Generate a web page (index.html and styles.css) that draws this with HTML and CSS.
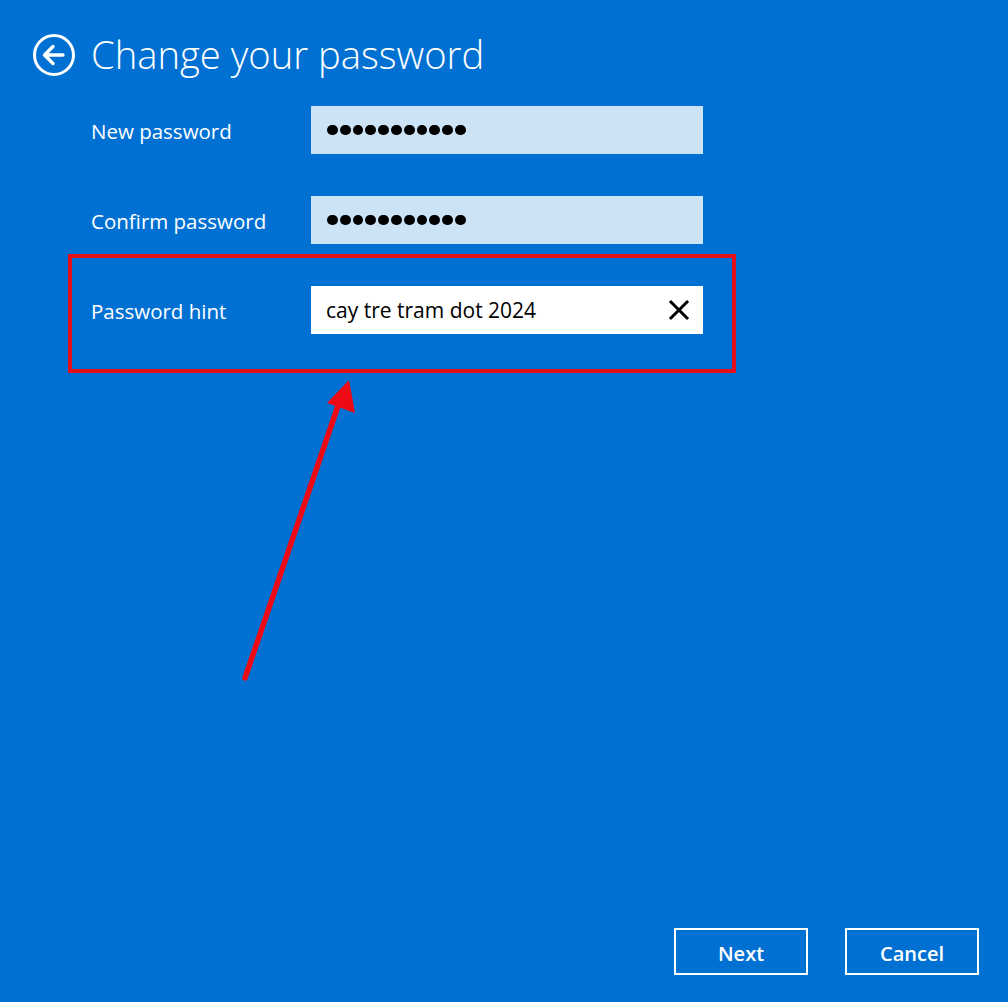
FILE: index.html
```html
<!DOCTYPE html>
<html>
<head>
<meta charset="utf-8">
<title>Change your password</title>
<link rel="stylesheet" href="styles.css">
</head>
<body>
<div class="page">
  <header class="header">
    <svg class="back" width="44" height="44" viewBox="0 0 44 44">
      <circle cx="22" cy="22" r="19.5" fill="none" stroke="#fff" stroke-width="3"/>
      <path d="M31 22 H13 M21 13.5 L12.5 22 L21 30.5" fill="none" stroke="#fff" stroke-width="3.4" stroke-linecap="round" stroke-linejoin="round"/>
    </svg>
    <h1 class="title">Change your password</h1>
  </header>

  <main class="form">
    <div class="row">
      <label class="label">New password</label>
      <div class="field field-filled">
        <span class="dots"><i></i><i></i><i></i><i></i><i></i><i></i><i></i><i></i><i></i><i></i><i></i></span>
      </div>
    </div>
    <div class="row">
      <label class="label">Confirm password</label>
      <div class="field field-filled">
        <span class="dots"><i></i><i></i><i></i><i></i><i></i><i></i><i></i><i></i><i></i><i></i><i></i></span>
      </div>
    </div>
    <div class="row row-highlight">
      <label class="label">Password hint</label>
      <div class="field field-active">
        <span class="value">cay tre tram dot 2024</span>
        <svg class="clear" width="22" height="22" viewBox="0 0 22 22">
          <path d="M3 3 L19 19 M19 3 L3 19" stroke="#000" stroke-width="3" stroke-linecap="square"/>
        </svg>
      </div>
    </div>
  </main>

  <footer class="footer">
    <button class="btn">Next</button>
    <button class="btn">Cancel</button>
  </footer>

  <svg class="arrow" width="1008" height="1002" viewBox="0 0 1008 1002">
    <line x1="245" y1="678" x2="340" y2="400" stroke="#ee0a14" stroke-width="5.5" stroke-linecap="round"/>
    <polygon points="349,380 327,403 355,413" fill="#ee0a14"/>
  </svg>
</div>
</body>
</html>
```

FILE: styles.css
```css
html, body {
  margin: 0;
  padding: 0;
}
body {
  background: #0071d3;
  font-family: "Open Sans", "Noto Sans", sans-serif;
  color: #fff;
}
.page {
  position: relative;
  width: 1008px;
  height: 1002px;
  display: flex;
  flex-direction: column;
  overflow: hidden;
}
.header {
  display: flex;
  align-items: center;
  padding: 33px 0 0 32px;
  height: 44px;
}
.back {
  display: block;
  flex: none;
}
.title {
  margin: 0 0 0 15px;
  font-weight: 300;
  font-size: 38.2px;
  line-height: 44px;
  letter-spacing: 0;
  color: #fff;
  position: relative;
  top: -1px;
}
.form {
  display: flex;
  flex-direction: column;
  padding-top: 29px;
}
.row {
  display: grid;
  grid-template-columns: 220px 392px;
  align-items: center;
  margin-left: 91px;
  margin-bottom: 42px;
}
.row-highlight {
  margin-left: 68px;
  margin-top: -32px;
  padding: 28px 29px 35px 19px;
  border: 4px solid #e3101b;
  box-sizing: content-box;
  width: 612px;
}
.label {
  font-size: 20.5px;
  line-height: 48px;
  color: #fff;
  position: relative;
  top: 1px;
}
.field {
  height: 48px;
  display: flex;
  align-items: center;
  padding: 0 14px 0 16px;
}
.field-filled {
  background: #cce3f6;
}
.field-active {
  background: #ffffff;
  justify-content: space-between;
}
.dots {
  display: flex;
  gap: 2px;
}
.dots i {
  display: block;
  width: 10.8px;
  height: 10.8px;
  border-radius: 50%;
  background: #000;
}
.value {
  color: #000;
  font-size: 21px;
  position: relative;
  left: -1px;
}
.clear {
  display: block;
  margin-right: -1px;
}
.footer {
  margin-top: auto;
  display: flex;
  justify-content: flex-end;
  gap: 37px;
  padding: 0 29px 27px 0;
}
.btn {
  width: 134px;
  height: 47px;
  background: transparent;
  border: 2.5px solid #fff;
  color: #fff;
  font-family: "Open Sans", "Noto Sans", sans-serif;
  font-weight: 600;
  font-size: 20px;
  padding: 0 0 0 0;
  line-height: 47px;
}
.arrow {
  position: absolute;
  left: 0;
  top: 0;
  pointer-events: none;
}
```
